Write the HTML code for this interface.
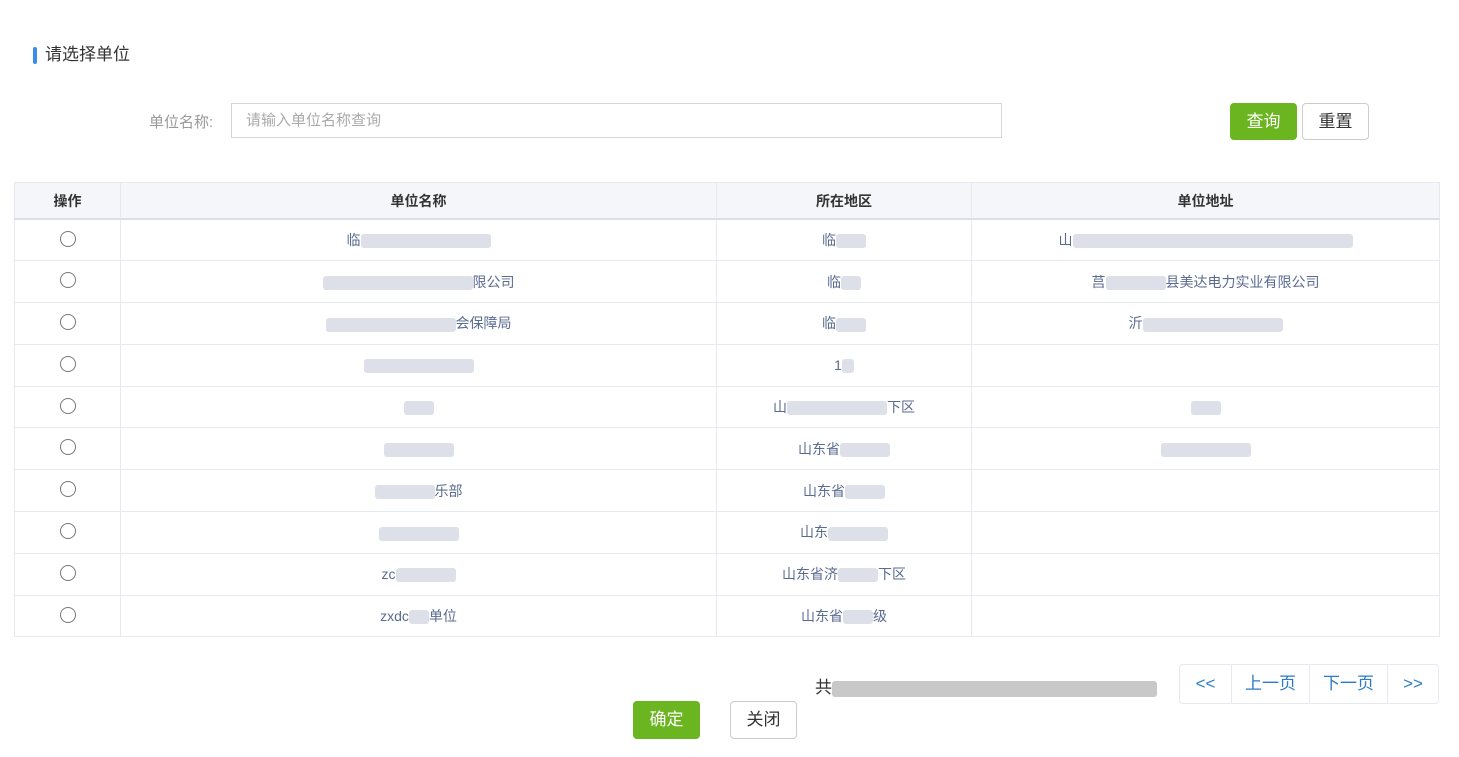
<!DOCTYPE html>
<html><head><meta charset="utf-8"><style>
body{margin:0;width:1459px;height:757px;background:#fff;font-family:"Liberation Sans","Noto Sans CJK SC",sans-serif;position:relative;overflow:hidden;color:#333}
.abs{position:absolute}
.title{left:33px;top:44px;font-size:17px;color:#333;line-height:22px}
.title:before{content:"";position:absolute;left:0;top:3px;width:4px;height:17px;background:#3a8ee6;border-radius:2px}
.title span{margin-left:12px}
.lbl{left:149px;top:111px;font-size:15px;color:#999}
.inp{left:231px;top:103px;width:769px;height:33px;border:1px solid #d5d5d5;font-size:15px;color:#aaa;line-height:33px;text-indent:14px;box-sizing:content-box}
.btn{border-radius:4px;text-align:center;font-size:17px;box-sizing:border-box}
table{position:absolute;left:14px;top:182px;width:1426px;border-collapse:collapse;font-size:14px;table-layout:fixed}
th{background:#f5f6fa;height:35px;font-weight:bold;color:#333;border:1px solid #e6e9f0;border-bottom:2px solid #dcdfe6;font-size:14px;padding:0}
td{border:1px solid #e6e9f0;text-align:center;color:#5a6a90;padding:0;line-height:16px}
tr.d{height:41.8px}
.r{display:inline-block;width:14px;height:14px;border:1px solid #777;border-radius:50%}
.bl{display:inline-block;background:#dde0e8;height:14px;vertical-align:middle;border-radius:3px}
.pg{left:1179px;top:664px;height:38px;border:1px solid #e6e9f0;border-radius:4px;display:flex;font-size:17px;color:#2d7bc4}
.pg div{line-height:38px;text-align:center;border-right:1px solid #e6e9f0}
</style></head><body>
<div class="abs title"><span>请选择单位</span></div>
<div class="abs lbl">单位名称:</div>
<div class="abs inp">请输入单位名称查询</div>
<div class="abs btn" style="left:1230px;top:103px;width:67px;height:37px;background:#6ab520;color:#fff;line-height:37px">查询</div>
<div class="abs btn" style="left:1302px;top:103px;width:67px;height:37px;border:1px solid #ccc;color:#333;line-height:35px">重置</div>
<table>
<colgroup><col style="width:106px"><col style="width:596px"><col style="width:255px"><col></colgroup>
<tr><th>操作</th><th>单位名称</th><th>所在地区</th><th>单位地址</th></tr>
<tr class="d"><td><span class="r"></span></td><td>临<span class="bl" style="width:130px"></span></td><td>临<span class="bl" style="width:30px"></span></td><td>山<span class="bl" style="width:280px"></span></td></tr>
<tr class="d"><td><span class="r"></span></td><td><span class="bl" style="width:150px"></span>限公司</td><td>临<span class="bl" style="width:20px"></span></td><td>莒<span class="bl" style="width:60px"></span>县美达电力实业有限公司</td></tr>
<tr class="d"><td><span class="r"></span></td><td><span class="bl" style="width:130px"></span>会保障局</td><td>临<span class="bl" style="width:30px"></span></td><td>沂<span class="bl" style="width:140px"></span></td></tr>
<tr class="d"><td><span class="r"></span></td><td><span class="bl" style="width:110px"></span></td><td>1<span class="bl" style="width:12px"></span></td><td></td></tr>
<tr class="d"><td><span class="r"></span></td><td><span class="bl" style="width:30px"></span></td><td>山<span class="bl" style="width:100px"></span>下区</td><td><span class="bl" style="width:30px"></span></td></tr>
<tr class="d"><td><span class="r"></span></td><td><span class="bl" style="width:70px"></span></td><td>山东省<span class="bl" style="width:50px"></span></td><td><span class="bl" style="width:90px"></span></td></tr>
<tr class="d"><td><span class="r"></span></td><td><span class="bl" style="width:60px"></span>乐部</td><td>山东省<span class="bl" style="width:40px"></span></td><td></td></tr>
<tr class="d"><td><span class="r"></span></td><td><span class="bl" style="width:80px"></span></td><td>山东<span class="bl" style="width:60px"></span></td><td></td></tr>
<tr class="d"><td><span class="r"></span></td><td>zc<span class="bl" style="width:60px"></span></td><td>山东省济<span class="bl" style="width:40px"></span>下区</td><td></td></tr>
<tr class="d"><td><span class="r"></span></td><td>zxdc<span class="bl" style="width:20px"></span>单位</td><td>山东省<span class="bl" style="width:30px"></span>级</td><td></td></tr>
</table>
<div class="abs" style="left:815px;top:673px;font-size:17px;color:#333">共<span class="bl" style="width:325px;background:#c8c8c8;height:16px"></span></div>
<div class="abs pg"><div style="width:51px">&lt;&lt;</div><div style="width:77px">上一页</div><div style="width:77px">下一页</div><div style="width:50px;border:none">&gt;&gt;</div></div>
<div class="abs btn" style="left:633px;top:701px;width:67px;height:38px;background:#6ab520;color:#fff;line-height:38px">确定</div>
<div class="abs btn" style="left:730px;top:701px;width:67px;height:38px;border:1px solid #ccc;color:#333;line-height:36px">关闭</div>
</body></html>
